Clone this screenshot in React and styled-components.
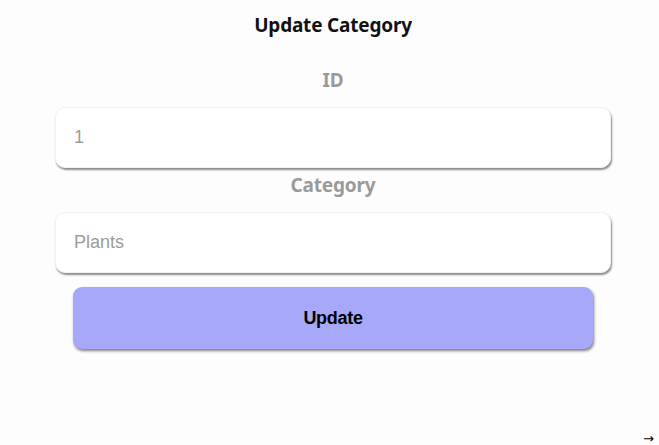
import React from "react";
import styled, { createGlobalStyle } from "styled-components";

const Global = createGlobalStyle`
  html, body { margin: 0; padding: 0; background: #fdfdfd; }
  body { width: 659px; height: 445px; overflow: hidden; position: relative; }
`;

const Page = styled.div`
  width: 659px;
  height: 445px;
  position: relative;
  box-sizing: border-box;
  padding-top: 11px;
  font-family: "Noto Sans", "Open Sans", sans-serif;
`;

const Title = styled.h2`
  margin: 0;
  width: 666px;
  text-align: center;
  font-size: 19px;
  font-weight: 700;
  color: #111;
  line-height: 28px;
  letter-spacing: -0.2px;
`;

const Form = styled.form`
  display: flex;
  flex-direction: column;
  margin: 0 0 0 55px;
  width: 556px;
`;

const Label = styled.label`
  display: block;
  text-align: center;
  font-size: 19px;
  font-weight: 700;
  color: #9a9a9a;
  line-height: 26px;
  margin-top: ${(p) => p.$top}px;
  margin-bottom: ${(p) => p.$bottom}px;
  letter-spacing: -0.2px;
`;

const Input = styled.input`
  box-sizing: border-box;
  width: 556px;
  height: 61px;
  border: 1px solid #f2f2f2;
  border-radius: 10px;
  background: #fff;
  box-shadow: 1px 2px 2px rgba(0, 0, 0, 0.45);
  padding: 0 18px;
  font-family: "Liberation Sans", Arial, sans-serif;
  font-size: 18px;
  color: #9c9c9c;
  outline: none;
  &::placeholder { color: #9c9c9c; }
`;

const Button = styled.button`
  box-sizing: border-box;
  align-self: center;
  margin-top: 14px;
  width: 520px;
  height: 62px;
  border: none;
  border-radius: 9px;
  background: #a8a8fa;
  box-shadow: 1px 2px 3px rgba(0, 0, 0, 0.5);
  font-family: "Liberation Sans", Arial, sans-serif;
  font-weight: 700;
  font-size: 18px;
  color: #000;
  letter-spacing: -0.3px;
`;

const Arrow = styled.span`
  position: absolute;
  left: 643px;
  top: 435px;
  display: block;
  height: 8px;
  font-family: "DejaVu Sans", sans-serif;
  font-size: 13px;
  line-height: 8px;
  color: #000;
`;

export default function App() {
  return (
    <>
      <Global />
      <Page>
        <Title>Update Category</Title>
        <Form onSubmit={(e) => e.preventDefault()}>
          <Label $top={28} $bottom={14}>ID</Label>
          <Input defaultValue="1" />
          <Label $top={4} $bottom={14}>Category</Label>
          <Input defaultValue="Plants" />
          <Button type="submit">Update</Button>
        </Form>
        <Arrow>→</Arrow>
      </Page>
    </>
  );
}
